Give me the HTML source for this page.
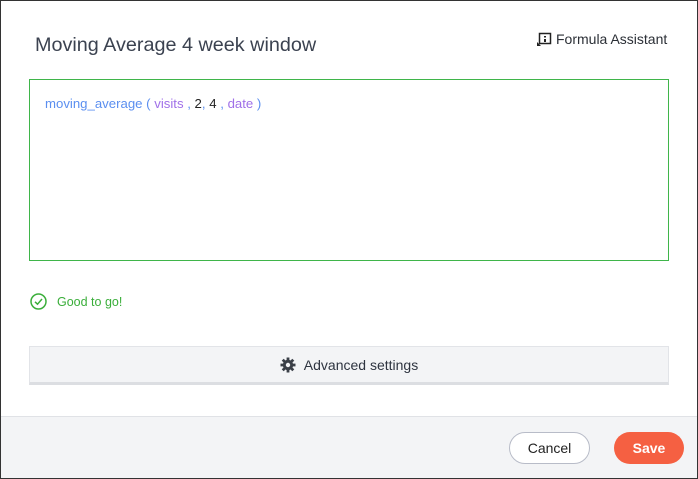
<!DOCTYPE html>
<html><head><meta charset="utf-8"><style>
*{box-sizing:border-box;margin:0;padding:0}
body{width:698px;height:479px;overflow:hidden;background:#fff;font-family:"Liberation Sans",sans-serif}
.frame{position:absolute;left:0;top:0;width:698px;height:479px;border:1px solid #333;}
.title{position:absolute;left:35px;top:34px;font-size:19.8px;color:#3b4250}
.fa{position:absolute;left:536px;top:31px;font-size:14px;color:#2b2f36;display:flex;align-items:center;gap:4px}
.editor{position:absolute;left:29px;top:79px;width:640px;height:182px;border:1px solid #3fb54a}
.code{position:absolute;left:45px;top:96px;font-size:13.2px;color:#5b8ff0;white-space:pre}
.p{color:#a070e8}.k{color:#222}
.ok{position:absolute;left:30px;top:293px;display:flex;align-items:center;gap:10px;color:#3aae3a;font-size:12.5px}
.adv{position:absolute;left:29px;top:346px;width:640px;height:39px;background:#f3f4f6;border:1px solid #e2e4e8;border-bottom:3px solid #dcdee2;display:flex;align-items:center;justify-content:center;gap:8px;font-size:14px;color:#2e3440}
.foot{position:absolute;left:1px;top:416px;width:696px;height:62px;background:#f3f4f6;border-top:1px solid #e0e2e6}
.btn{position:absolute;top:432px;height:32px;border-radius:16px;font-size:14px;display:flex;align-items:center;justify-content:center}
.cancel{left:509px;width:81px;background:#fff;border:1px solid #b8bcc8;color:#222}
.save{left:614px;width:70px;background:#f56042;color:#fff;font-weight:bold}
</style></head><body>
<div class="foot"></div>
<div class="frame"></div>
<div class="title">Moving Average 4 week window</div>
<div class="fa"><svg width="16" height="16" viewBox="0 0 16 16"><rect x="3.5" y="2.5" width="11" height="10" fill="none" stroke="#222" stroke-width="1.5"/><rect x="8" y="5" width="2" height="1.5" fill="#222"/><rect x="8" y="8" width="2" height="3" fill="#222"/><path d="M1 15 L1 11 L5 15 Z" fill="#222"/></svg>Formula Assistant</div>
<div class="editor"></div>
<div class="code">moving_average ( <span class="p">visits</span> , <span class="k">2</span>, <span class="k">4</span> , <span class="p">date</span> )</div>
<div class="ok"><svg width="17" height="17" viewBox="0 0 17 17"><circle cx="8.5" cy="8.5" r="7.5" fill="none" stroke="#3aae3a" stroke-width="1.5"/><path d="M5 8.8 L7.5 11.2 L12 6" fill="none" stroke="#3aae3a" stroke-width="1.5"/></svg>Good to go!</div>
<div class="adv"><svg width="16" height="16" viewBox="0 0 16 16"><g fill="#3b4048"><circle cx="8" cy="8" r="5.2"/><rect x="6.6" y="0.5" width="2.8" height="15"/><rect x="0.5" y="6.6" width="15" height="2.8"/><rect x="6.6" y="0.5" width="2.8" height="15" transform="rotate(45 8 8)"/><rect x="6.6" y="0.5" width="2.8" height="15" transform="rotate(-45 8 8)"/></g><circle cx="8" cy="8" r="2.2" fill="#f3f4f6"/></svg>Advanced settings</div>
<div class="btn cancel">Cancel</div>
<div class="btn save">Save</div>
</body></html>
